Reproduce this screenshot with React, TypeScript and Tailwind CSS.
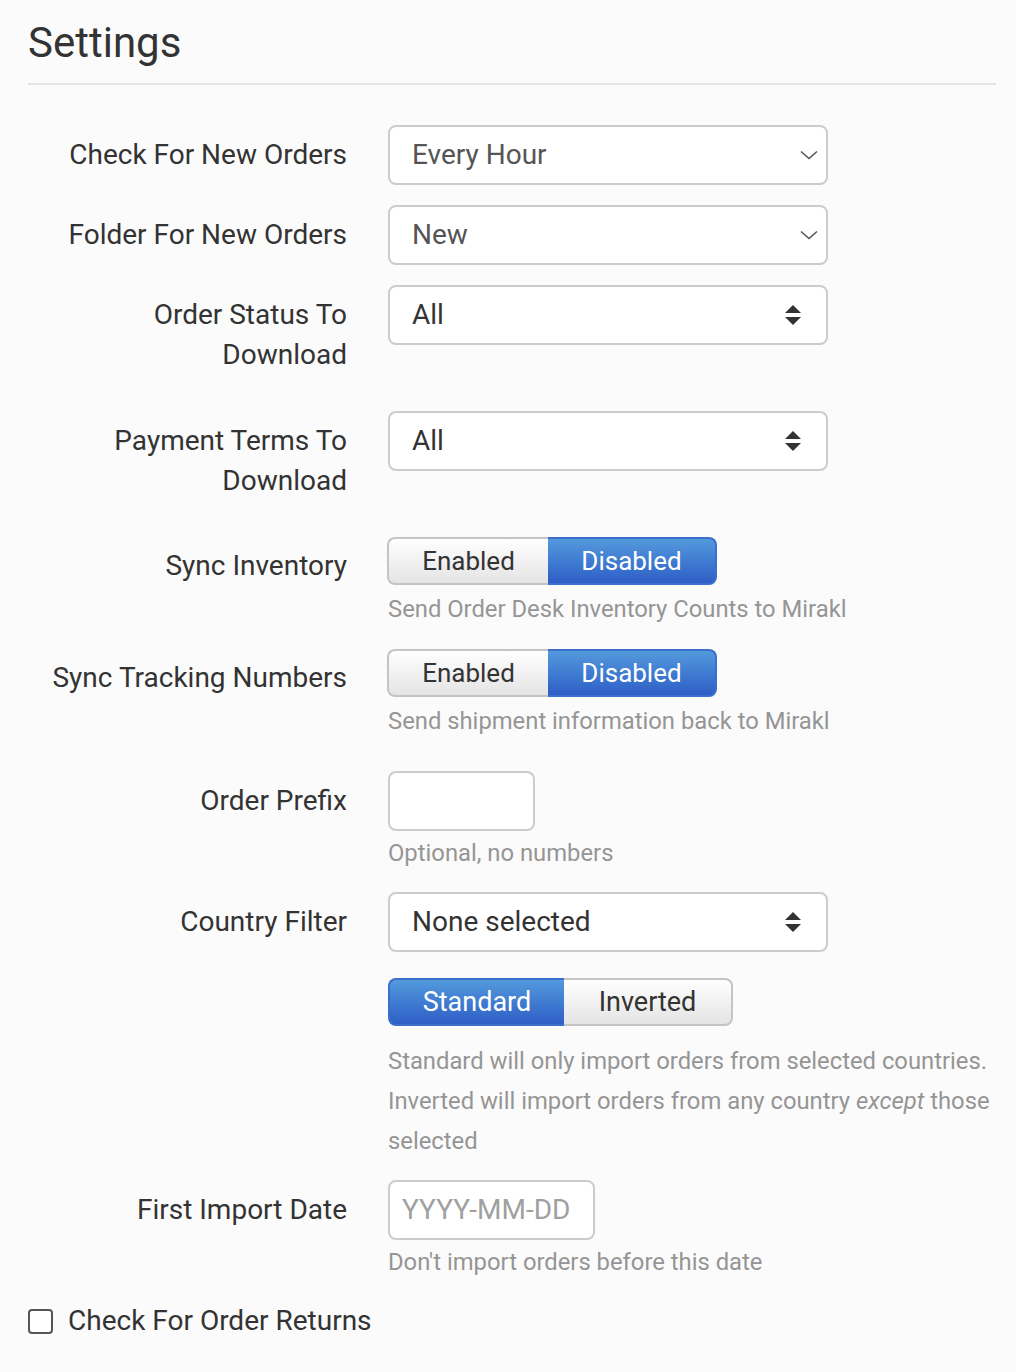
import React from "react";

const font = { fontFamily: "Roboto, 'Noto Sans', sans-serif" };

function Chevron() {
  return (
    <svg width="18" height="10" viewBox="0 0 18 10" className="absolute right-[8px] top-1/2 -translate-y-1/2">
      <path d="M1 1.5 L9 8.5 L17 1.5" fill="none" stroke="#555" strokeWidth="1.6" />
    </svg>
  );
}

function UpDown() {
  return (
    <svg width="18" height="22" viewBox="0 0 18 22" className="absolute right-[24px] top-1/2 -translate-y-1/2">
      <path d="M1 9 L9 1 L17 9 Z" fill="#333" />
      <path d="M1 13 L9 21 L17 13 Z" fill="#333" />
    </svg>
  );
}

function Select({ value, arrows }: { value: string; arrows?: boolean }) {
  return (
    <div
      className={`relative flex h-[60px] w-[440px] items-center rounded-[8px] border-2 border-[#cccccc] bg-white pl-[22px] text-[28px] ${
        arrows ? "text-[#333]" : "text-[#555]"
      }`}
    >
      {value}
      {arrows ? <UpDown /> : <Chevron />}
    </div>
  );
}

function Toggle({ left, right, active, wl, wr, size }: { left: string; right: string; active: "left" | "right"; wl: number; wr: number; size: string }) {
  const on = "bg-gradient-to-b from-[#5499dc] to-[#2f5ec6] text-white border-[#3a6fcc]";
  const off = "bg-gradient-to-b from-white to-[#e4e4e4] text-[#333] border-[#c4c4c4]";
  return (
    <div className={`flex h-[48px] ${size}`}>
      <div
        style={{ width: wl }}
        className={`flex items-center justify-center rounded-l-[8px] border-2 border-r-0 ${active === "left" ? on : off}`}
      >
        {left}
      </div>
      <div
        style={{ width: wr }}
        className={`flex items-center justify-center rounded-r-[8px] border-2 border-l-0 ${active === "right" ? on : off}`}
      >
        {right}
      </div>
    </div>
  );
}

function Row({ label, mt, pt = "pt-[10px]", children }: { label: React.ReactNode; mt: string; pt?: string; children: React.ReactNode }) {
  return (
    <div className={`flex ${mt}`}>
      <div className={`w-[319px] shrink-0 text-right text-[28px] leading-[40px] text-[#333] ${pt}`}>{label}</div>
      <div className="ml-[41px] flex-1">{children}</div>
    </div>
  );
}

function Help({ children, mt, lh = "leading-[36px]" }: { children: React.ReactNode; mt: string; lh?: string }) {
  return <div className={`${mt} ${lh} text-[23.8px] text-[#959595]`}>{children}</div>;
}

export default function App() {
  return (
    <div style={font} className="min-h-[1372px] bg-[#fbfbfb] pl-[28px] pr-[20px]">
      <h1 className="pt-[19px] text-[42px] leading-[48px] text-[#333]">Settings</h1>
      <div className="mt-[16px] border-b-2 border-[#e4e4e4]" />

      <Row label="Check For New Orders" mt="mt-[40px]">
        <Select value="Every Hour" />
      </Row>
      <Row label="Folder For New Orders" mt="mt-[20px]">
        <Select value="New" />
      </Row>
      <Row label={<>Order Status To<br />Download</>} mt="mt-[20px]">
        <Select value="All" arrows />
      </Row>
      <Row label={<>Payment Terms To<br />Download</>} mt="mt-[36px]">
        <Select value="All" arrows />
      </Row>

      <Row label="Sync Inventory" mt="mt-[36px]" pt="pt-[9px]">
        <Toggle left="Enabled" right="Disabled" active="right" wl={161} wr={169} size="text-[26px] -ml-px" />
        <Help mt="mt-[6px]">Send Order Desk Inventory Counts to Mirakl</Help>
      </Row>
      <Row label="Sync Tracking Numbers" mt="mt-[22px]" pt="pt-[9px]">
        <Toggle left="Enabled" right="Disabled" active="right" wl={161} wr={169} size="text-[26px] -ml-px" />
        <Help mt="mt-[6px]">Send shipment information back to Mirakl</Help>
      </Row>

      <Row label="Order Prefix" mt="mt-[32px]">
        <div className="h-[60px] w-[147px] rounded-[8px] border-2 border-[#cccccc] bg-white" />
        <Help mt="mt-[4px]">Optional, no numbers</Help>
      </Row>

      <Row label="Country Filter" mt="mt-[21px]">
        <Select value="None selected" arrows />
        <div className="mt-[26px]">
          <Toggle left="Standard" right="Inverted" active="left" wl={176} wr={169} size="text-[27px]" />
        </div>
        <Help mt="mt-[15px]" lh="leading-[40px]">
          Standard will only import orders from selected countries. Inverted will import orders from any country{" "}
          <em>except</em> those selected
        </Help>
      </Row>

      <Row label="First Import Date" mt="mt-[19px]">
        <div className="flex h-[60px] w-[207px] items-center rounded-[8px] border-2 border-[#cccccc] bg-white pl-[12px] text-[28px] text-[#a0a0a0]">
          YYYY-MM-DD
        </div>
        <Help mt="mt-[4px]">Don't import orders before this date</Help>
      </Row>

      <div className="mt-[21px] flex items-center gap-[15px] text-[28px] leading-[40px] text-[#333]">
        <div className="h-[25px] w-[25px] rounded-[4px] border-2 border-[#555] bg-white" />
        <span>Check For Order Returns</span>
      </div>
    </div>
  );
}
